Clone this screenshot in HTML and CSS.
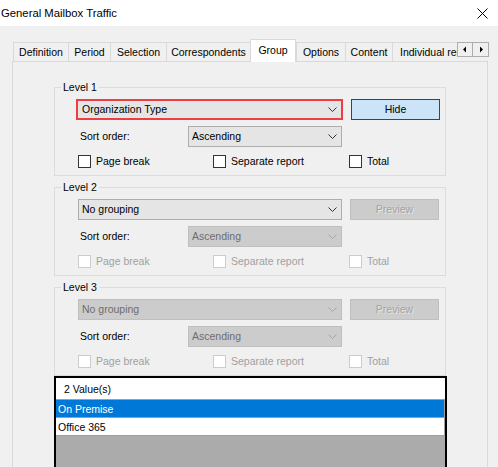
FILE: index.html
```html
<!DOCTYPE html>
<html>
<head>
<meta charset="utf-8">
<link rel="stylesheet" href="styles.css">
</head>
<body>
<div class="titlebar">
  <span class="title">General Mailbox Traffic</span>
  <svg class="close" width="11" height="11" viewBox="0 0 11 11"><path d="M0.5 0.5 L10.5 10.5 M10.5 0.5 L0.5 10.5" stroke="#000" stroke-width="1" fill="none"/></svg>
</div>
<div class="tabstrip">
  <div class="tabs">
    <div class="tab t-def">Definition</div>
    <div class="tab t-per">Period</div>
    <div class="tab t-sel">Selection</div>
    <div class="tab t-cor">Correspondents</div>
    <div class="tab active t-grp">Group</div>
    <div class="tab t-opt">Options</div>
    <div class="tab t-con">Content</div>
    <div class="tab t-ind">Individual reports</div>
  </div>
  <div class="scroller">
    <span class="sbtn"><svg width="6" height="7" viewBox="0 0 6 7"><path d="M4 0.5 L4 6.5 L1 3.5 Z" fill="#000"/></svg></span>
    <span class="sbtn"><svg width="6" height="7" viewBox="0 0 6 7"><path d="M2 0.5 L2 6.5 L5 3.5 Z" fill="#000"/></svg></span>
  </div>
</div>
<div class="panel">
  <fieldset class="level">
    <legend>Level 1</legend>
    <div class="inner">
      <div class="row1">
        <div class="combo focus"><span>Organization Type</span><svg class="chev" width="9" height="5" viewBox="0 0 9 5"><path d="M0.5 0.5 L4.5 4.5 L8.5 0.5" stroke="#333" fill="none"/></svg></div>
        <div class="btn hide">Hide</div>
      </div>
      <div class="row2">
        <span class="sortlabel">Sort order:</span>
        <div class="combo select"><span>Ascending</span><svg class="chev" width="9" height="5" viewBox="0 0 9 5"><path d="M0.5 0.5 L4.5 4.5 L8.5 0.5" stroke="#333" fill="none"/></svg></div>
      </div>
      <div class="checks">
        <label class="check c1"><span class="box"></span>Page break</label>
        <label class="check c2"><span class="box"></span>Separate report</label>
        <label class="check"><span class="box"></span>Total</label>
      </div>
    </div>
  </fieldset>
  <fieldset class="level">
    <legend>Level 2</legend>
    <div class="inner">
      <div class="row1">
        <div class="combo"><span>No grouping</span><svg class="chev" width="9" height="5" viewBox="0 0 9 5"><path d="M0.5 0.5 L4.5 4.5 L8.5 0.5" stroke="#333" fill="none"/></svg></div>
        <div class="btn disabled">Preview</div>
      </div>
      <div class="row2">
        <span class="sortlabel">Sort order:</span>
        <div class="combo select disabled"><span>Ascending</span><svg class="chev" width="9" height="5" viewBox="0 0 9 5"><path d="M0.5 0.5 L4.5 4.5 L8.5 0.5" stroke="#a6a6a6" fill="none"/></svg></div>
      </div>
      <div class="checks off">
        <label class="check c1"><span class="box"></span>Page break</label>
        <label class="check c2"><span class="box"></span>Separate report</label>
        <label class="check"><span class="box"></span>Total</label>
      </div>
    </div>
  </fieldset>
  <fieldset class="level">
    <legend>Level 3</legend>
    <div class="inner">
      <div class="row1">
        <div class="combo disabled"><span>No grouping</span><svg class="chev" width="9" height="5" viewBox="0 0 9 5"><path d="M0.5 0.5 L4.5 4.5 L8.5 0.5" stroke="#a6a6a6" fill="none"/></svg></div>
        <div class="btn disabled">Preview</div>
      </div>
      <div class="row2">
        <span class="sortlabel">Sort order:</span>
        <div class="combo select disabled"><span>Ascending</span><svg class="chev" width="9" height="5" viewBox="0 0 9 5"><path d="M0.5 0.5 L4.5 4.5 L8.5 0.5" stroke="#a6a6a6" fill="none"/></svg></div>
      </div>
      <div class="checks off">
        <label class="check c1"><span class="box"></span>Page break</label>
        <label class="check c2"><span class="box"></span>Separate report</label>
        <label class="check"><span class="box"></span>Total</label>
      </div>
    </div>
  </fieldset>
</div>
<div class="popup">
  <div class="phead">2 Value(s)</div>
  <div class="plist">
    <div class="prow selected">On Premise</div>
    <div class="prow">Office 365</div>
  </div>
</div>
</body>
</html>
```
FILE: styles.css
```css
* { box-sizing: border-box; }
html, body { margin: 0; padding: 0; }
body {
  width: 498px;
  height: 467px;
  overflow: hidden;
  background: #f0f0f0;
  font-family: "Liberation Sans", Arial, sans-serif;
  font-size: 10.5px;
  color: #000;
  position: relative;
}
.titlebar {
  height: 26px;
  background: #fff;
  display: flex;
  align-items: center;
  justify-content: space-between;
  padding: 0 10px 0 1px;
}
.title { font-size: 11.3px; }
.close { display: block; }

.tabstrip {
  margin: 13px 0 0 13px;
  height: 22px;
  display: flex;
  align-items: flex-start;
  position: relative;
  z-index: 2;
}
.tabs {
  display: flex;
  align-items: flex-start;
  width: 444px;
  height: 23px;
  overflow: hidden;
  flex: none;
}
.tab {
  flex: none;
  margin-top: 3px;
  height: 19px;
  border-top: 1px solid #d9d9d9;
  border-left: 1px solid #d9d9d9;
  background: #f0f0f0;
  display: flex;
  align-items: center;
  justify-content: center;
  white-space: nowrap;
  padding-bottom: 1px;
}
.tab.active {
  margin-top: 0;
  height: 23px;
  background: #fff;
  border-right: 1px solid #d9d9d9;
  padding-bottom: 3px;
}
.t-def { width: 55px; }
.t-per { width: 42px; }
.t-sel { width: 56px; }
.t-cor { width: 84px; }
.t-grp { width: 46px; }
.t-opt { width: 49px; }
.t-con { width: 47px; }
.t-ind { width: 80px; justify-content: flex-start; padding-left: 7px; }

.scroller {
  display: flex;
  margin-top: 3px;
  flex: none;
}
.sbtn {
  width: 16px;
  height: 15px;
  border: 1px solid #adadad;
  background: #f0f0f0;
  display: flex;
  align-items: center;
  justify-content: center;
}
.sbtn + .sbtn { margin-left: -1px; width: 17px; }
.sbtn svg { display: block; }

.panel {
  margin-left: 12px;
  width: 476px;
  height: 420px;
  border: 1px solid #d9d9d9;
  background: #f0f0f0;
  padding: 19px 0 0 41px;
  position: relative;
  z-index: 1;
}
.level {
  margin: 0 0 5px 0;
  width: 392px;
  border: 1px solid #dcdcdc;
  padding: 5px 0 7px 0;
  min-width: 0;
}
.level legend {
  margin-left: 6px;
  padding: 0 2px;
  line-height: 13px;
  font-size: 10.5px;
}
.inner { margin-left: 23px; }

.row1 {
  display: flex;
  gap: 8px;
  height: 21px;
}
.combo {
  width: 264px;
  height: 21px;
  border: 1px solid #adadad;
  background: #e5e5e5;
  display: flex;
  align-items: center;
  justify-content: space-between;
  padding: 0 4px 1px 3px;
  white-space: nowrap;
}
.combo .chev { display: block; margin-top: 1px; }
.combo.focus {
  width: 267px;
  margin-left: -2px;
  border: 2px solid #ee3e43;
  padding-left: 4px;
  padding-right: 4px;
}
.combo.disabled {
  background: #cccccc;
  border-color: #bfbfbf;
  color: #6d6d6d;
}
.btn {
  width: 89px;
  height: 21px;
  display: flex;
  align-items: center;
  justify-content: center;
  padding-bottom: 1px;
}
.btn.hide {
  background: #cce4f7;
  border: 1px solid #005499;
}
.btn.disabled {
  background: #cccccc;
  border: 1px solid #bfbfbf;
  color: #a3a3a3;
  text-shadow: 1px 1px 0 #e6e6e6;
}
.row2 {
  margin-top: 6px;
  display: flex;
  align-items: center;
  height: 21px;
}
.sortlabel {
  width: 110px;
  padding-left: 2px;
  padding-bottom: 1px;
}
.combo.select { width: 154px; }

.checks {
  margin-top: 7px;
  height: 14px;
  display: flex;
  align-items: center;
}
.check {
  display: flex;
  align-items: center;
  gap: 5px;
  white-space: nowrap;
}
.check.c1 { width: 135px; }
.check.c2 { width: 136px; }
.box {
  width: 13px;
  height: 13px;
  border: 1px solid #333;
  background: #fff;
  flex: none;
}
.checks.off { color: #a0a0a0; }
.checks.off .box { border-color: #cccccc; }

.popup {
  position: absolute;
  left: 54px;
  top: 376px;
  width: 393px;
  height: 100px;
  border: 2px solid #000;
  border-bottom: none;
  background: #ababab;
  z-index: 5;
}
.phead {
  height: 21px;
  background: #fff;
  padding-left: 8px;
  display: flex;
  align-items: center;
}
.plist {
  border-right: 1px solid #a0a0a0;
  border-bottom: 1px solid #a0a0a0;
}
.prow {
  height: 18px;
  border-top: 1px solid #a0a0a0;
  background: #fff;
  padding-left: 2px;
  display: flex;
  align-items: center;
}
.prow.selected {
  background: #0078d7;
  color: #fff;
}
```
